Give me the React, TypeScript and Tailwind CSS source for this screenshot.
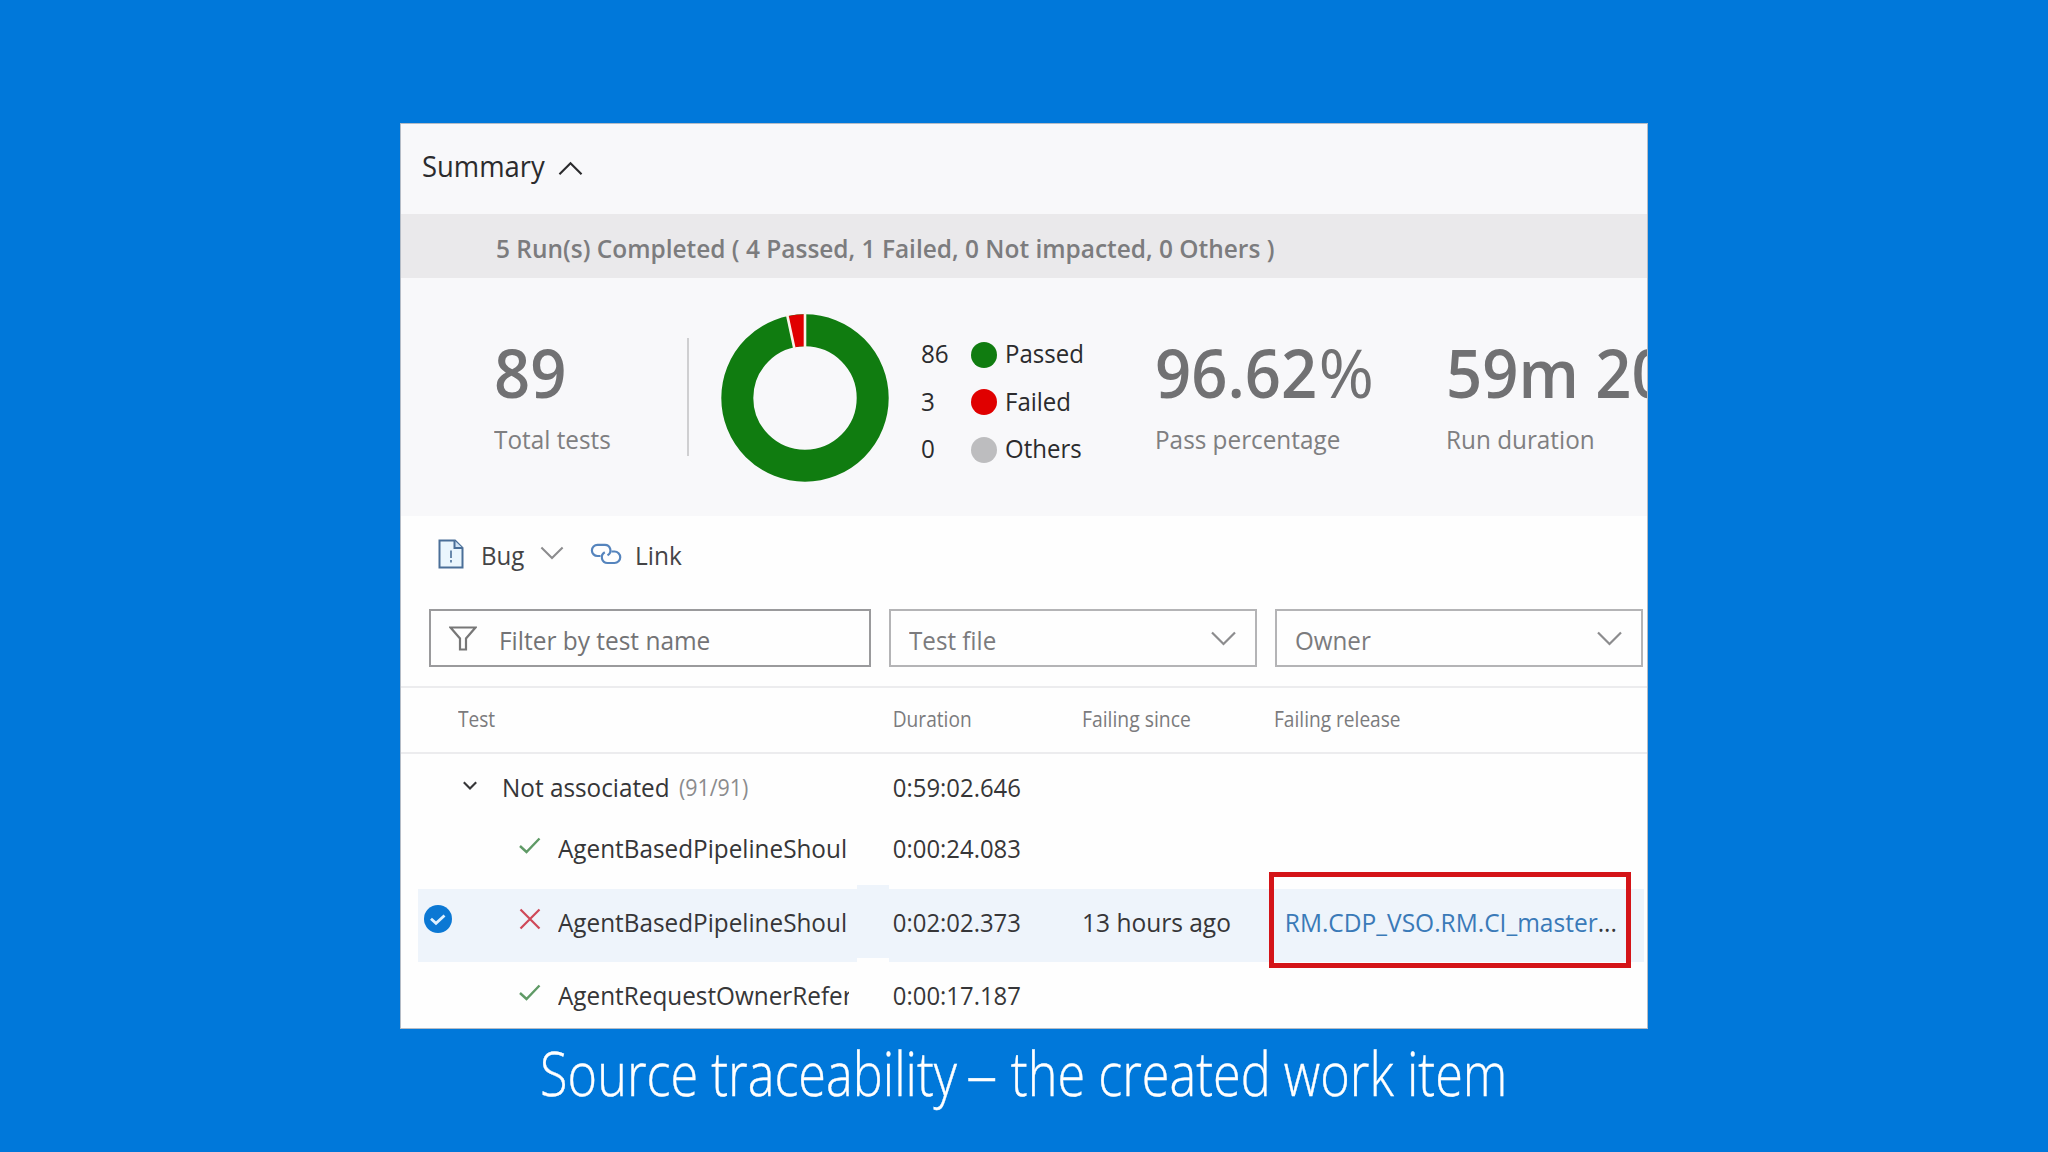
import React from 'react';
import clsx from 'clsx';

const legend = [
  { count: 86, label: 'Passed', color: 'bg-[#107c10]' },
  { count: 3, label: 'Failed', color: 'bg-[#e00000]' },
  { count: 0, label: 'Others', color: 'bg-[#bdbdbf]' },
];

const Text = ({ className, children }: { className?: string; children: React.ReactNode }) => (
  <span className={clsx('inline-block origin-left whitespace-nowrap', className)}>{children}</span>
);

const Chevron = ({ className, up }: { className?: string; up?: boolean }) => (
  <svg viewBox="0 0 26 15" className={className} fill="none" stroke="currentColor" strokeWidth="2.2">
    <path d={up ? 'M1.5 13.5 13 2l11.5 11.5' : 'M1.5 1.5 13 13 24.5 1.5'} />
  </svg>
);

const Donut = () => (
  <svg viewBox="0 0 170 170" className="w-[170px] h-[170px]">
    <circle cx="85" cy="85" r="67.7" fill="none" stroke="#107c10" strokeWidth="32" />
    <g transform="rotate(-102.1 85 85)">
      <circle
        cx="85"
        cy="85"
        r="67.7"
        fill="none"
        stroke="#e00000"
        strokeWidth="32"
        pathLength="89"
        strokeDasharray="3 86"
      />
    </g>
    <g stroke="#fbf3ea" strokeWidth="2.6">
      <path d="M85 0V35" />
      <path d="M85 0V35" transform="rotate(-12.1 85 85)" />
    </g>
  </svg>
);

const BugIcon = () => (
  <svg viewBox="0 0 26 30" className="w-[26px] h-[30px]" fill="none" stroke="#4a6f98" strokeWidth="2">
    <path d="M1.5 1.5H17L24.5 9V28.5H1.5Z" fill="#eaf6fd" />
    <path d="M16.5 1.5V9H24.5" fill="#cfe3f5" />
    <path d="M13 11.5V19M13 21V23.5" strokeWidth="1.6" />
  </svg>
);

const LinkIcon = () => (
  <svg viewBox="0 0 32 22" className="w-[32px] h-[22px]" fill="none" stroke="#5584bd" strokeWidth="2.2">
    <path d="M10.5 13H7.5A5.6 5.6 0 0 1 7.5 1.8H14.5A5.6 5.6 0 0 1 17.5 12.3" />
    <path d="M21.5 8.5H24.5A5.7 5.7 0 0 1 24.5 20H17.5A5.7 5.7 0 0 1 14.8 9.3" />
  </svg>
);

const FunnelIcon = () => (
  <svg viewBox="0 0 28 25" className="w-[28px] h-[25px]" fill="none" stroke="#777" strokeWidth="2.2">
    <path d="M1.5 1.5H26.5L17 12.5V23.5H11V12.5Z" />
  </svg>
);

const PassIcon = () => (
  <svg viewBox="0 0 22 17" className="w-[22px] h-[17px]" fill="none" stroke="#5f9a66" strokeWidth="2.4">
    <path d="M1 9 7.5 15 20.5 1.5" />
  </svg>
);

const FailIcon = () => (
  <svg viewBox="0 0 22 22" className="w-[22px] h-[22px]" fill="none" stroke="#cf4858" strokeWidth="2.2">
    <path d="M1.5 1.5 20.5 20.5M20.5 1.5 1.5 20.5" />
  </svg>
);

const Stat = ({ value, label, className }: { value: React.ReactNode; label: string; className?: string }) => (
  <div className={clsx('flex flex-col items-start pt-[54px]', className)}>
    <Text className="text-[67px] leading-[80px] font-semibold text-[#717173] scale-x-[.945]">{value}</Text>
    <Text className="mt-[7px] text-[26px] leading-[40px] text-[#7f7f81] scale-x-[.935]">{label}</Text>
  </div>
);

const Select = ({ label }: { label: string }) => (
  <div className="flex h-[58px] w-[368px] shrink-0 items-center justify-between border-2 border-[#b4b4b6] pl-[18px] pr-[18px]">
    <Text className="pt-[4px] text-[26px] text-[#7b7b7d] scale-x-[.93]">{label}</Text>
    <Chevron className="h-[15px] w-[27px] text-[#8c8c8e]" />
  </div>
);

const columns = 'grid grid-cols-[489px_192px_192px_1fr] items-center';

const TestRow = ({ name, duration, className }: { name: string; duration: string; className?: string }) => (
  <div className={clsx(columns, className)}>
    <div className="flex items-center pl-[118px]">
      <span className="mb-[7px] w-[39px]">
        <PassIcon />
      </span>
      <div className="w-[291px] overflow-hidden">
        <Text className="scale-x-[.972]">{name}</Text>
      </div>
    </div>
    <Text className="pl-[3px] scale-x-[.955]">{duration}</Text>
  </div>
);

const App = () => {
  return (
    <div className="flex h-[1152px] w-full flex-col items-center overflow-hidden bg-[#0078da] pt-[123px] font-['Open_Sans','Noto_Sans',sans-serif]">
      <div className="flex h-[906px] w-[1248px] shrink-0 flex-col overflow-hidden border border-[#b5bcc6] bg-[#fefefe]">
        {/* Summary header */}
        <div className="flex h-[90px] shrink-0 items-center bg-[#f8f8fa] pb-[6px] pl-[21px] text-[#2b2b2d]">
          <div className="w-[136px]">
            <Text className="text-[29px] scale-x-[.945]">Summary</Text>
          </div>
          <Chevron up className="mt-[5px] h-[15px] w-[25px]" />
        </div>
        <div className="flex h-[64px] shrink-0 items-center bg-[#eae9eb] pl-[95px] pt-[5px]">
          <Text className="text-[26px] font-semibold text-[#7c7c7e] scale-x-[.94]">
            5 Run(s) Completed ( 4 Passed, 1 Failed, 0 Not impacted, 0 Others )
          </Text>
        </div>

        {/* Stats */}
        <div className="grid h-[238px] shrink-0 grid-cols-[286px_232px_236px_291px_1fr] bg-[#f8f8fa]">
          <Stat value="89" label="Total tests" className="pl-[93px]" />
          <div className="flex items-start">
            <div className="mt-[60px] h-[118px] w-[2px] bg-[#cfcfd1]" />
            <div className="ml-[31px] mt-[35px]">
              <Donut />
            </div>
          </div>
          <div className="pt-[52px] text-[25px] text-[#2b2b2d]">
            {legend.map((item) => (
              <div key={item.label} className="flex h-[47.5px] items-center">
                <Text className="w-[52px] scale-x-[.97] pl-[2px]">{item.count}</Text>
                <span className={clsx('mt-[2px] h-[26px] w-[26px] rounded-full', item.color)} />
                <Text className="ml-[8px] scale-x-[.96]">{item.label}</Text>
              </div>
            ))}
          </div>
          <Stat
            value={<>96.62<Text className="pl-px font-normal scale-x-[1.06]">%</Text></>}
            label="Pass percentage"
          />
          <Stat value="59m 20" label="Run duration" />
        </div>

        {/* Toolbar */}
        <div className="flex h-[78px] shrink-0 items-center pl-[37px] text-[26px] text-[#444446]">
          <span className="mb-[3px] w-[43px]">
            <BugIcon />
          </span>
          <Text className="w-[59px] scale-x-[.925]">Bug</Text>
          <Chevron className="mb-[4px] h-[14px] w-[24px] text-[#8c8c8e]" />
          <span className="mb-[3px] ml-[26px] w-[44px]">
            <LinkIcon />
          </span>
          <Text className="ml-px scale-x-[.94]">Link</Text>
        </div>

        {/* Filters */}
        <div className="mt-[15px] flex shrink-0 gap-[18px] pl-[28px]">
          <div className="flex h-[58px] w-[442px] shrink-0 items-center border-2 border-[#9a9a9c] pl-[18px]">
            <span className="w-[50px]">
              <FunnelIcon />
            </span>
            <Text className="pt-[4px] text-[26px] text-[#737375] scale-x-[.94]">Filter by test name</Text>
          </div>
          <Select label="Test file" />
          <Select label="Owner" />
        </div>

        {/* Test results */}
        <div
          className={clsx(
            columns,
            'mt-[19px] h-[68px] shrink-0 border-y-2 border-[#ececee] text-[21px] text-[#7b7b7d]'
          )}
        >
          <div className="pl-[57px]">
            <Text className="scale-x-[.91]">Test</Text>
          </div>
          <Text className="pl-[3px] scale-x-[.91]">Duration</Text>
          <Text className="scale-x-[.92]">Failing since</Text>
          <Text className="scale-x-[.91]">Failing release</Text>
        </div>
        <div className="shrink-0 text-[25px] text-[#363638]">
          <div className={clsx(columns, 'h-[67px]')}>
            <div className="flex items-center pl-[62px]">
              <Chevron className="mb-[5px] h-[9px] w-[14px] [stroke-width:4]" />
              <Text className="ml-[25px] w-[177px] scale-x-[.972]">Not associated</Text>
              <Text className="text-[23px] text-[#8b8b8d] scale-x-[.93]">(91/91)</Text>
            </div>
            <Text className="pl-[3px] scale-x-[.955]">0:59:02.646</Text>
          </div>
          <TestRow className="h-[56px]" name="AgentBasedPipelineShoul" duration="0:00:24.083" />
          {/* Selected row */}
          <div className={clsx(columns, 'relative mt-[12px] mr-[3px] h-[73px] pb-[6px]')}>
            <div className="absolute inset-y-0 left-[17px] right-0 bg-[#eef4fb]" />
            <div className="absolute bottom-0 left-[456px] h-[4px] w-[32px] bg-[#fefefe]" />
            <div className="absolute -top-[4px] left-[456px] h-[4px] w-[32px] bg-[#eef4fb]" />
            <div className="relative flex items-center pl-[23px]">
              <svg viewBox="0 0 28 28" className="mb-[8px] h-[28px] w-[28px]">
                <circle cx="14" cy="14" r="14" fill="#0b78d4" />
                <path d="M7 13.8 12 18.3 20.5 10.5" fill="none" stroke="#dff1ff" strokeWidth="2.8" />
              </svg>
              <span className="mb-[8px] ml-[67px] w-[39px]">
                <FailIcon />
              </span>
              <Text className="w-[291px] scale-x-[.972]">AgentBasedPipelineShoul</Text>
            </div>
            <Text className="relative pl-[3px] scale-x-[.955]">0:02:02.373</Text>
            <Text className="relative scale-x-[.98]">13 hours ago</Text>
            <Text className="relative pl-[11px] scale-x-[.98]">
              <span className="text-[#3a7ab8]">RM.CDP_VSO.RM.CI_master</span>...
            </Text>
            <div className="absolute -top-[17px] left-[868px] h-[96px] w-[362px] border-[5px] border-[#d41418]" />
          </div>
          <TestRow className="h-[67px]" name="AgentRequestOwnerRefere" duration="0:00:17.187" />
        </div>
      </div>

      <h1 className="mt-[2px] whitespace-nowrap text-[60px] leading-[84px] font-light text-white scale-x-[.84] [-webkit-text-stroke:0.4px_white]">
        Source traceability{' '}
        <span className="-ml-[5px] inline-block w-[38px] origin-left scale-x-[1.25]">–</span> the created work item
      </h1>
    </div>
  );
};

export default App;
